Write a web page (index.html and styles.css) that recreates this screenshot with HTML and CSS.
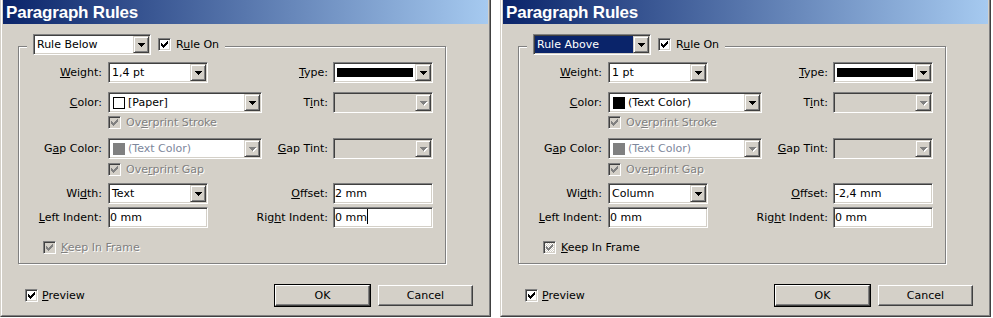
FILE: index.html
```html
<!DOCTYPE html>
<html lang="en">
<head>
  <meta charset="UTF-8">
  <title>Paragraph Rules</title>
  <link rel="stylesheet" href="styles.css">
</head>
<body>

  <svg class="defs" width="0" height="0">
    <symbol id="tick" viewBox="0 0 7 7">
      <path d="M0 2h1v3h-1zM1 3h1v3h-1zM2 4h1v3h-1zM3 3h1v3h-1zM4 2h1v3h-1zM5 1h1v3h-1zM6 0h1v3h-1z"/>
    </symbol>
  </svg>

  <div class="desktop">

    <!-- Rule Below -->
    <div class="window">
      <div class="frame">
        <div class="titlebar">Paragraph Rules</div>
        <div class="content">
          <fieldset class="group">
            <legend class="group-head">
              <div class="field combo rule"><span class="value">Rule Below</span><span class="drop"></span></div>
              <label class="check"><span class="box"><svg><use href="#tick"/></svg></span><span>R<u>u</u>le On</span></label>
            </legend>
            <div class="grid">
              <span class="label"><u>W</u>eight:</span>
              <div class="field combo"><span class="value">1,4 pt</span><span class="drop"></span></div>
              <span class="label right span2"><u>T</u>ype:</span>
              <div class="field combo"><span class="value"><span class="stroke"></span></span><span class="drop"></span></div>

              <span class="label"><u>C</u>olor:</span>
              <div class="field combo span2"><span class="value"><span class="swatch paper"></span>[Paper]</span><span class="drop"></span></div>
              <span class="label right">T<u>i</u>nt:</span>
              <div class="field combo off"><span class="value"></span><span class="drop"></span></div>

              <label class="check check-row disabled-text"><span class="box off"><svg><use href="#tick"/></svg></span><span>Ov<u>e</u>rprint Stroke</span></label>

              <span class="label">G<u>a</u>p Color:</span>
              <div class="field combo muted span2"><span class="value"><span class="swatch grey"></span>(Text Color)</span><span class="drop"></span></div>
              <span class="label right"><u>G</u>ap Tint:</span>
              <div class="field combo off"><span class="value"></span><span class="drop"></span></div>

              <label class="check check-row disabled-text"><span class="box off"><svg><use href="#tick"/></svg></span><span>Ove<u>r</u>print Gap</span></label>

              <span class="label">Wi<u>d</u>th:</span>
              <div class="field combo"><span class="value">Text</span><span class="drop"></span></div>
              <span class="label right span2"><u>O</u>ffset:</span>
              <div class="field input">2 mm</div>

              <span class="label"><u>L</u>eft Indent:</span>
              <div class="field input">0 mm</div>
              <span class="label right span2">Rig<u>h</u>t Indent:</span>
              <div class="field input">0 mm<span class="caret"></span></div>

              <label class="check check-row keep disabled-text"><span class="box off"><svg><use href="#tick"/></svg></span><span><u>K</u>eep In Frame</span></label>
            </div>
          </fieldset>

          <div class="footer">
            <label class="check preview"><span class="box"><svg><use href="#tick"/></svg></span><span><u>P</u>review</span></label>
            <div class="buttons">
              <div class="btn default">OK</div>
              <div class="btn">Cancel</div>
            </div>
          </div>
        </div>
      </div>
    </div>

    <!-- Rule Above -->
    <div class="window">
      <div class="frame">
        <div class="titlebar">Paragraph Rules</div>
        <div class="content">
          <fieldset class="group">
            <legend class="group-head">
              <div class="field combo rule"><span class="value selected">Rule Above</span><span class="drop"></span></div>
              <label class="check"><span class="box"><svg><use href="#tick"/></svg></span><span>R<u>u</u>le On</span></label>
            </legend>
            <div class="grid">
              <span class="label"><u>W</u>eight:</span>
              <div class="field combo"><span class="value">1 pt</span><span class="drop"></span></div>
              <span class="label right span2"><u>T</u>ype:</span>
              <div class="field combo"><span class="value"><span class="stroke"></span></span><span class="drop"></span></div>

              <span class="label"><u>C</u>olor:</span>
              <div class="field combo span2"><span class="value"><span class="swatch ink"></span>(Text Color)</span><span class="drop"></span></div>
              <span class="label right">T<u>i</u>nt:</span>
              <div class="field combo off"><span class="value"></span><span class="drop"></span></div>

              <label class="check check-row disabled-text"><span class="box off"><svg><use href="#tick"/></svg></span><span>Ov<u>e</u>rprint Stroke</span></label>

              <span class="label">G<u>a</u>p Color:</span>
              <div class="field combo muted span2"><span class="value"><span class="swatch grey"></span>(Text Color)</span><span class="drop"></span></div>
              <span class="label right"><u>G</u>ap Tint:</span>
              <div class="field combo off"><span class="value"></span><span class="drop"></span></div>

              <label class="check check-row disabled-text"><span class="box off"><svg><use href="#tick"/></svg></span><span>Ove<u>r</u>print Gap</span></label>

              <span class="label">Wi<u>d</u>th:</span>
              <div class="field combo"><span class="value">Column</span><span class="drop"></span></div>
              <span class="label right span2"><u>O</u>ffset:</span>
              <div class="field input">-2,4 mm</div>

              <span class="label"><u>L</u>eft Indent:</span>
              <div class="field input">0 mm</div>
              <span class="label right span2">Rig<u>h</u>t Indent:</span>
              <div class="field input">0 mm</div>

              <label class="check check-row keep"><span class="box mixed"><svg><use href="#tick"/></svg></span><span><u>K</u>eep In Frame</span></label>
            </div>
          </fieldset>

          <div class="footer">
            <label class="check preview"><span class="box"><svg><use href="#tick"/></svg></span><span><u>P</u>review</span></label>
            <div class="buttons">
              <div class="btn default">OK</div>
              <div class="btn">Cancel</div>
            </div>
          </div>
        </div>
      </div>
    </div>

  </div>

</body>
</html>
```

FILE: styles.css
```css
:root {
  --face: #d4d0c8;
  --light: #fff;
  --shadow: #808080;
  --dark: #404040;
  --select: #0a246a;
}

html, body {
  margin: 0;
  padding: 0;
  background: #fff;
}

body {
  font-family: "DejaVu Sans", sans-serif;
  font-size: 11px;
  color: #000;
}

.defs {
  position: absolute;
}

.desktop {
  display: flex;
  gap: 9px;
}

/* window chrome */
.window {
  width: 491px;
  height: 317px;
  box-sizing: border-box;
  background: var(--face);
  border: 1px solid;
  border-top: 0;
  border-color: var(--face) var(--dark) var(--dark) var(--face);
}

.frame {
  height: 100%;
  box-sizing: border-box;
  border: 1px solid;
  border-top: 0;
  border-color: var(--light) var(--shadow) var(--shadow) var(--light);
  padding: 0 1px 1px;
}

.titlebar {
  height: 24px;
  line-height: 25px;
  padding-left: 3px;
  color: #fff;
  font-family: "Liberation Sans", sans-serif;
  font-weight: bold;
  font-size: 17px;
  letter-spacing: -0.2px;
  background: linear-gradient(to right, #0a246a, #a6caf0);
}

.content {
  padding: 10px 15px 0;
}

/* group box */
.group {
  width: 428px;
  box-sizing: border-box;
  margin: 0;
  padding: 3px 0 6px 0;
  min-inline-size: 0;
  border: 1px solid var(--shadow);
  box-shadow: inset 1px 1px var(--light), 1px 1px var(--light);
}

.group-head {
  display: flex;
  align-items: center;
  gap: 7px;
  margin-left: 8px;
  padding: 0 6px 4px;
  background: var(--face);
}

.grid {
  display: grid;
  grid-template-columns: 89px 100px 54px 71px 100px;
  grid-template-rows: 30px 20px 26px 21px 24px 24px 30px 20px;
  align-items: start;
}

.label {
  justify-self: end;
  white-space: nowrap;
  line-height: 21px;
  padding-right: 6px;
}

.label.right {
  padding-right: 5px;
}

.span2 {
  grid-column: span 2;
}

/* checkboxes */
.check {
  display: flex;
  align-items: center;
  gap: 5px;
  white-space: nowrap;
  line-height: 13px;
}

.check-row {
  grid-column: 2 / 6;
  margin-top: 4px;
}

.check-row.keep {
  grid-column: 1 / 6;
  margin-left: 24px;
}

.check.preview {
  gap: 4px;
}

.disabled-text {
  color: var(--shadow);
  text-shadow: 1px 1px var(--light);
}

.box {
  flex: none;
  width: 13px;
  height: 13px;
  box-sizing: border-box;
  padding: 2px;
  border: 1px solid;
  border-color: var(--shadow) var(--light) var(--light) var(--shadow);
  box-shadow: inset 1px 1px var(--dark), inset -1px -1px var(--face);
  background: #fff;
  color: #000;
}

.box svg {
  display: block;
  width: 7px;
  height: 7px;
  fill: currentColor;
  shape-rendering: crispEdges;
}

.box.off {
  background: var(--face);
  color: var(--shadow);
}

.box.mixed {
  background: repeating-conic-gradient(#fff 0 25%, var(--face) 0 50%) 0 0 / 2px 2px;
  color: var(--shadow);
}

/* sunken fields */
.field {
  height: 21px;
  box-sizing: border-box;
  padding: 1px;
  border: 1px solid;
  border-color: var(--shadow) var(--light) var(--light) var(--shadow);
  box-shadow: inset 1px 1px var(--dark), inset -1px -1px var(--face);
  background: #fff;
}

.combo {
  display: flex;
}

.combo.rule {
  width: 118px;
}

.combo.off {
  background: var(--face);
}

.value {
  flex: 1;
  display: flex;
  align-items: center;
  gap: 3px;
  padding-left: 2px;
  white-space: nowrap;
  overflow: hidden;
}

.value.selected {
  background: var(--select);
  color: #fff;
}

.combo.muted .value {
  color: #7d879c;
}

.drop {
  flex: none;
  width: 16px;
  box-sizing: border-box;
  border: 1px solid;
  border-color: var(--face) var(--dark) var(--dark) var(--face);
  box-shadow: inset 1px 1px var(--light), inset -1px -1px var(--shadow);
  background: var(--face);
  color: #000;
}

.drop::after {
  content: "";
  display: block;
  width: 7px;
  height: 4px;
  margin: 6px 0 0 4px;
  background:
    linear-gradient(currentColor, currentColor) 0 0 / 7px 1px no-repeat,
    linear-gradient(currentColor, currentColor) 1px 1px / 5px 1px no-repeat,
    linear-gradient(currentColor, currentColor) 2px 2px / 3px 1px no-repeat,
    linear-gradient(currentColor, currentColor) 3px 3px / 1px 1px no-repeat;
}

.combo.off .drop,
.combo.muted .drop {
  color: var(--shadow);
}

.combo.off .drop::after,
.combo.muted .drop::after {
  filter: drop-shadow(1px 1px 0 var(--light));
}

.swatch {
  flex: none;
  width: 12px;
  height: 12px;
  box-sizing: border-box;
  margin-left: 1px;
  border: 1px solid #000;
}

.swatch.paper { background: #fff; }
.swatch.ink { background: #000; }
.swatch.grey { background: #808080; border-color: #808080; }

.stroke {
  width: 76px;
  height: 9px;
  background: #000;
}

.input {
  line-height: 17px;
  white-space: nowrap;
}

.caret {
  display: inline-block;
  width: 1px;
  height: 15px;
  background: #000;
  vertical-align: -3px;
}

/* footer */
.footer {
  display: flex;
  align-items: center;
  height: 21px;
  margin-top: 21px;
  padding-left: 7px;
}

.buttons {
  margin-left: auto;
  display: flex;
  gap: 8px;
}

.btn {
  width: 95px;
  height: 21px;
  box-sizing: border-box;
  display: flex;
  align-items: center;
  justify-content: center;
  background: var(--face);
  border: 1px solid;
  border-color: var(--light) var(--dark) var(--dark) var(--light);
  box-shadow: inset -1px -1px var(--shadow);
}

.btn.default {
  box-shadow: 0 0 0 1px #000, inset -1px -1px var(--shadow);
}
```
